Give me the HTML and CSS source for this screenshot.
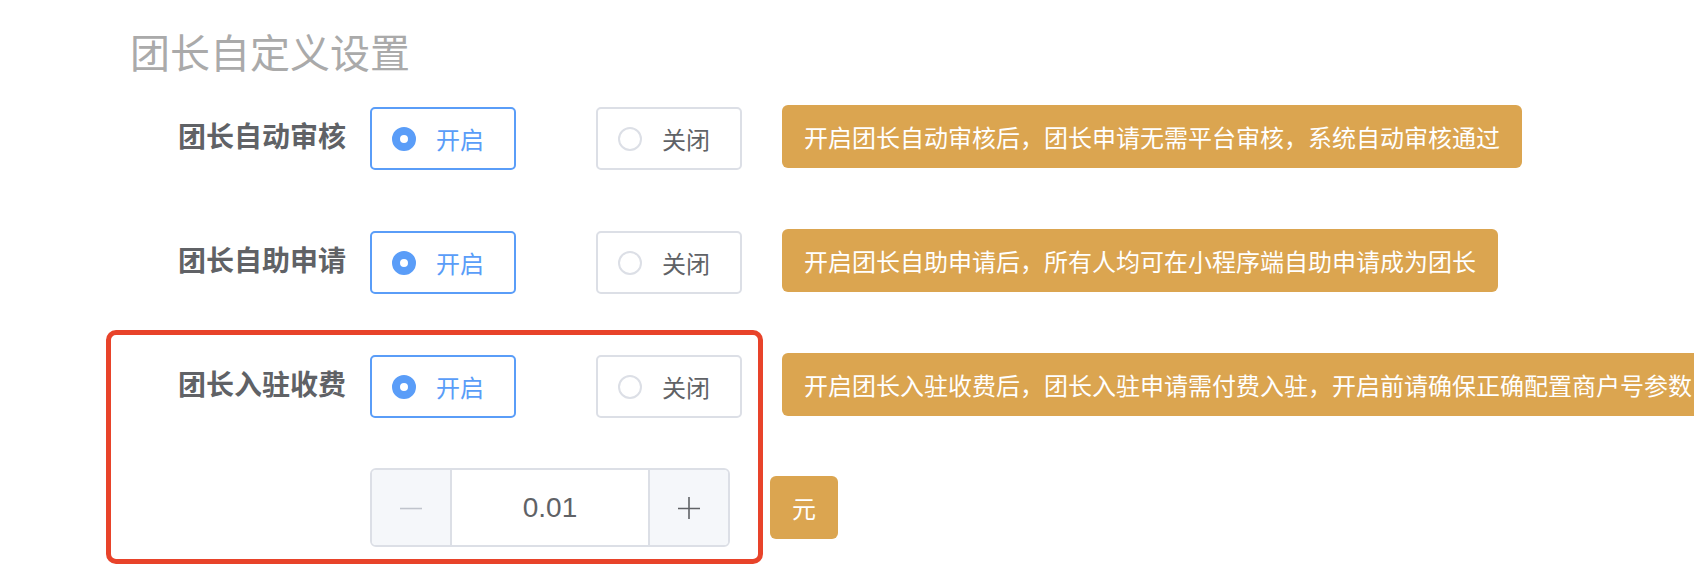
FILE: index.html
```html
<!DOCTYPE html>
<html lang="zh-CN">
<head>
<meta charset="utf-8">
<title>团长自定义设置</title>
<link rel="stylesheet" href="styles.css">
</head>
<body>
<h1 class="title">团长自定义设置</h1>
<div class="form">
  <div class="row">
    <div class="label">团长自动审核</div>
    <div class="content">
      <div class="line">
        <label class="radio is-checked"><span class="dot"></span><span class="radio-text">开启</span></label>
        <label class="radio"><span class="dot"></span><span class="radio-text">关闭</span></label>
        <div class="tip">开启团长自动审核后，团长申请无需平台审核，系统自动审核通过</div>
      </div>
    </div>
  </div>
  <div class="row">
    <div class="label">团长自助申请</div>
    <div class="content">
      <div class="line">
        <label class="radio is-checked"><span class="dot"></span><span class="radio-text">开启</span></label>
        <label class="radio"><span class="dot"></span><span class="radio-text">关闭</span></label>
        <div class="tip">开启团长自助申请后，所有人均可在小程序端自助申请成为团长</div>
      </div>
    </div>
  </div>
  <div class="row row-marked">
    <div class="highlight"></div>
    <div class="label">团长入驻收费</div>
    <div class="content">
      <div class="line">
        <label class="radio is-checked"><span class="dot"></span><span class="radio-text">开启</span></label>
        <label class="radio"><span class="dot"></span><span class="radio-text">关闭</span></label>
        <div class="tip">开启团长入驻收费后，团长入驻申请需付费入驻，开启前请确保正确配置商户号参数</div>
      </div>
      <div class="line num-line">
        <div class="num">
          <span class="num-btn num-minus"><svg width="22" height="22" viewBox="0 0 22 22"><path d="M0 11.5H22" stroke="#c0c4cc" stroke-width="1.6"/></svg></span>
          <span class="num-value">0.01</span>
          <span class="num-btn num-plus"><svg width="22" height="22" viewBox="0 0 22 22"><path d="M0 11.5H22M11 0V22" stroke="#606266" stroke-width="1.6"/></svg></span>
        </div>
        <div class="unit">元</div>
      </div>
    </div>
  </div>
</div>
</body>
</html>
```
FILE: styles.css
```css
html, body {
  margin: 0;
  padding: 0;
  overflow: hidden;
  background: #ffffff;
}
body {
  font-family: "Noto Sans CJK SC", "Noto Sans", sans-serif;
  color: #606266;
  width: 1694px;
  height: 584px;
}
.title {
  margin: 0;
  padding: 23px 0 0 130px;
  font-size: 40px;
  font-weight: 400;
  line-height: 56px;
  color: #aaaaaa;
}
.form {
  margin-top: 28px;
}
.row {
  display: flex;
  align-items: flex-start;
  margin-bottom: 61px;
}
.row-marked {
  position: relative;
}
.highlight {
  position: absolute;
  left: 106px;
  top: -25px;
  width: 657px;
  height: 234px;
  box-sizing: border-box;
  border: 5px solid #e8432a;
  border-radius: 10px;
  pointer-events: none;
}
.label {
  width: 370px;
  box-sizing: border-box;
  padding-right: 24px;
  text-align: right;
  font-size: 28px;
  font-weight: 700;
  line-height: 56px;
  color: #606266;
  flex: none;
}
.content {
  display: flex;
  flex-direction: column;
}
.line {
  display: flex;
  align-items: flex-start;
  white-space: nowrap;
}
.radio {
  display: flex;
  align-items: center;
  box-sizing: border-box;
  width: 146px;
  height: 63px;
  padding-left: 20px;
  border: 2px solid #dcdfe6;
  border-radius: 5px;
  margin-right: 80px;
  font-size: 24px;
  color: #606266;
  flex: none;
}
.radio + .radio {
  margin-right: 40px;
}
.dot {
  width: 24px;
  height: 24px;
  box-sizing: border-box;
  border: 2px solid #dcdfe6;
  border-radius: 50%;
  margin-right: 20px;
  background: #fff;
  flex: none;
}
.radio.is-checked {
  border-color: #5a9df8;
  color: #5a9df8;
}
.radio.is-checked .dot {
  border: 8px solid #5a9df8;
  background: #fff;
}
.radio-text {
  line-height: 1;
}
.tip {
  margin-top: -2px;
  height: 63px;
  line-height: 63px;
  padding: 0 22px;
  background: #dba550;
  border-radius: 6px;
  color: #ffffff;
  font-size: 24px;
  flex: none;
}
.num-line {
  margin-top: 50px;
  align-items: center;
}
.num {
  display: flex;
  width: 360px;
  height: 79px;
  box-sizing: border-box;
  border: 2px solid #dcdfe6;
  border-radius: 6px;
  overflow: hidden;
  background: #fff;
}
.num-btn {
  width: 78px;
  display: flex;
  align-items: center;
  justify-content: center;
  background: #f5f7fa;
  flex: none;
}
.num-minus {
  border-right: 2px solid #dcdfe6;
}
.num-plus {
  border-left: 2px solid #dcdfe6;
}
.num-value {
  flex: 1;
  display: flex;
  align-items: center;
  justify-content: center;
  font-family: "Liberation Sans", Arial, sans-serif;
  font-size: 28px;
  color: #606266;
}
.unit {
  margin-left: 40px;
  width: 68px;
  height: 63px;
  line-height: 63px;
  text-align: center;
  background: #dba550;
  border-radius: 6px;
  color: #fff;
  font-size: 24px;
}
```
